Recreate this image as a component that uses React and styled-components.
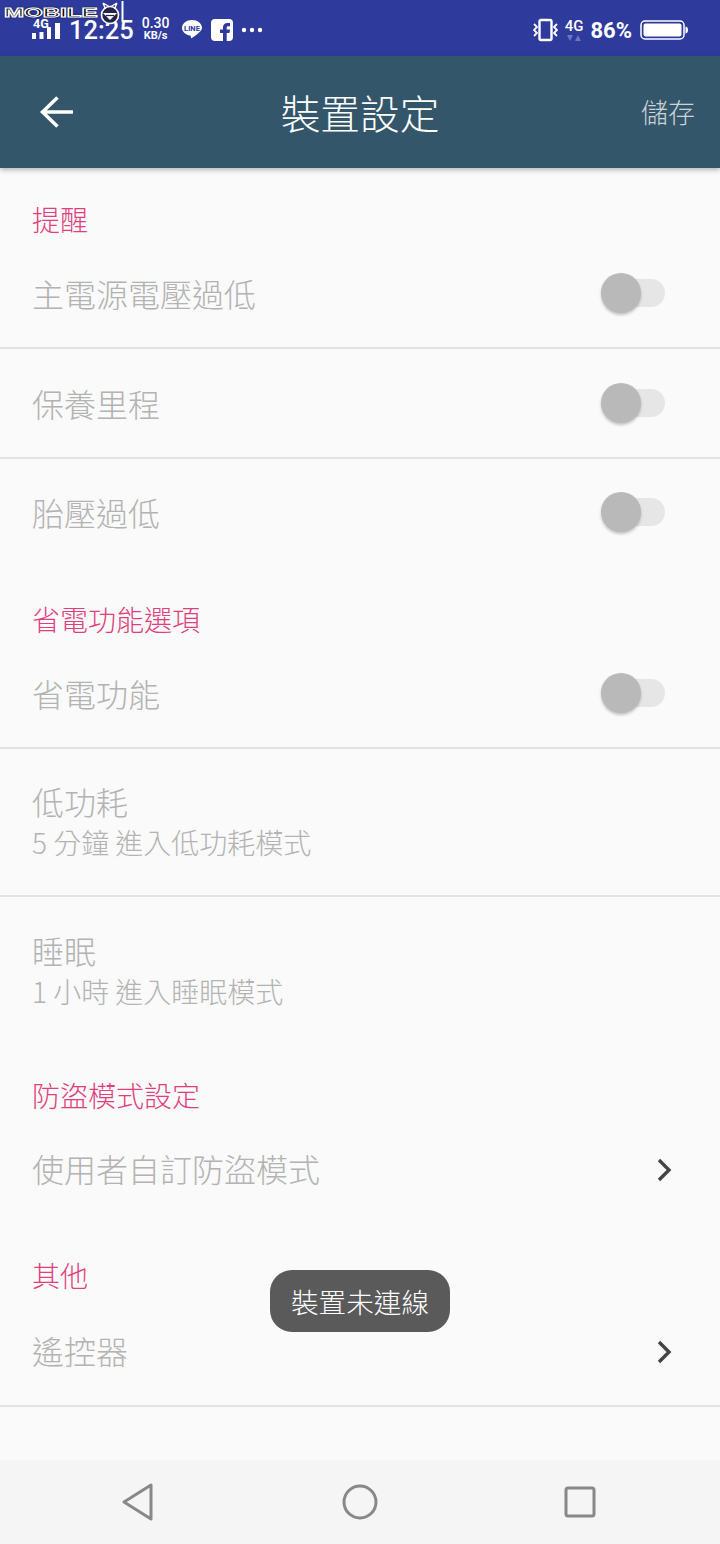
import React from "react";
import styled, { createGlobalStyle } from "styled-components";

const cjk = `"Noto Sans CJK TC", "Noto Sans", sans-serif`;

const GlobalStyle = createGlobalStyle`
  html, body {
    margin: 0;
    padding: 0;
    background: #fafafa;
  }
  * {
    box-sizing: border-box;
  }
`;

const Page = styled.div`
  width: 720px;
  height: 1544px;
  position: relative;
  display: flex;
  flex-flow: column;
  overflow: hidden;
  background: #fafafa;
  font-family: ${cjk};
  font-weight: 300;
`;

const StatusBar = styled.div`
  height: 56px;
  flex: none;
  background: #2e3b9c;
  color: #fff;
  display: flex;
  align-items: center;
  justify-content: space-between;
  padding: 4px 32px 0 32px;
  font-family: Roboto, sans-serif;
`;

const StatusGroup = styled.div`
  display: flex;
  align-items: center;
  gap: ${({ $gap }) => $gap || 8}px;
`;

const SignalBox = styled.div`
  position: relative;
  width: 29px;
  height: 38px;
`;

const SignalLabel = styled.span`
  position: absolute;
  left: 1px;
  top: 8px;
  font-size: 12.5px;
  font-weight: 700;
  line-height: 10px;
`;

const Clock = styled.span`
  font-size: 25.5px;
  font-weight: 500;
`;

const Speed = styled.div`
  display: flex;
  flex-flow: column;
  align-items: center;
  font-size: 14px;
  font-weight: 500;
  line-height: 14px;
  margin-top: -3px;
  small {
    font-size: 11px;
    font-weight: 700;
    line-height: 12px;
  }
`;

const Net = styled.div`
  display: flex;
  flex-flow: column;
  align-items: center;
  font-size: 15px;
  font-weight: 500;
  line-height: 14px;
`;

const Battery = styled.span`
  font-size: 22px;
  font-weight: 700;
`;

const Watermark = styled.div`
  position: absolute;
  left: 4px;
  top: 8px;
  display: flex;
  align-items: flex-start;
`;

const WatermarkText = styled.span`
  font-family: "Liberation Sans", sans-serif;
  font-weight: 700;
  font-size: 13px;
  line-height: 10px;
  width: 94px;
  white-space: nowrap;
  color: #000;
  -webkit-text-stroke: 0.9px #fff;
  text-shadow: 0 0 2px #000;
  transform: scaleX(1.85);
  transform-origin: left center;
`;

const WatermarkLogo = styled.svg`
  margin-top: -7px;
`;

const Toolbar = styled.div`
  height: 112px;
  flex: none;
  background: #34566b;
  display: flex;
  align-items: center;
  justify-content: space-between;
  padding: 0 25px 0 40px;
  position: relative;
  box-shadow: 0 2px 5px rgba(0, 0, 0, 0.28);
  z-index: 2;
`;

const ToolbarTitle = styled.div`
  position: absolute;
  left: 0;
  right: 0;
  text-align: center;
  color: #fff;
  font-size: 39.7px;
  line-height: 56px;
`;

const SaveLabel = styled.span`
  color: #ccd3d8;
  font-size: 27px;
  line-height: 40px;
`;

const Content = styled.div`
  flex: 1;
  display: flex;
  flex-flow: column;
`;

const SectionHeading = styled.div`
  height: 71px;
  padding: 34px 0 0 32px;
  color: #df3f7d;
  font-size: 28px;
  line-height: 34px;
`;

const Row = styled.div`
  height: ${({ $height }) => $height}px;
  flex: none;
  display: flex;
  align-items: center;
  justify-content: space-between;
  padding: 0 48px ${({ $trim }) => $trim || 0}px 32px;
  border-bottom: ${({ $divider }) => ($divider ? "2px solid #e3e3e3" : "none")};
`;

const RowText = styled.div`
  display: flex;
  flex-flow: column;
`;

const RowTitle = styled.div`
  color: #b3b3b3;
  font-size: 32px;
  line-height: 41px;
`;

const RowSub = styled.div`
  color: #b3b3b3;
  font-size: 28px;
  line-height: 41px;
`;

const ToggleTrack = styled.div`
  position: relative;
  width: 58px;
  height: 28px;
  margin-right: 7px;
  border-radius: 14px;
  background: #e6e6e6;
`;

const ToggleThumb = styled.div`
  position: absolute;
  left: -6px;
  top: -6px;
  width: 40px;
  height: 40px;
  border-radius: 50%;
  background: #b9b9b9;
  box-shadow: 0 2px 3px rgba(0, 0, 0, 0.22);
`;

const Chevron = styled.svg`
  margin-top: 3px;
`;

const Toast = styled.div`
  position: absolute;
  left: 270px;
  top: 1270px;
  width: 180px;
  height: 62px;
  border-radius: 22px;
  background: #5a5a5a;
  color: #fff;
  font-size: 27.6px;
  line-height: 62px;
  text-align: center;
`;

const NavBar = styled.div`
  height: 84px;
  flex: none;
  background: #f5f5f5;
  display: grid;
  grid-template-columns: 275px 170px 270px;
  align-items: center;
  justify-items: center;
`;

const SettingRow = ({ title, sub, divider, toggle, chevron, height, trim }) => (
  <Row $divider={divider} $height={height} $trim={trim}>
    <RowText>
      <RowTitle>{title}</RowTitle>
      {sub && <RowSub>{sub}</RowSub>}
    </RowText>
    {toggle && (
      <ToggleTrack>
        <ToggleThumb />
      </ToggleTrack>
    )}
    {chevron && (
      <Chevron width="16" height="24" viewBox="0 0 16 24" fill="none">
        <path d="M3 2l10 10L3 22" stroke="#444" strokeWidth="3.4" />
      </Chevron>
    )}
  </Row>
);

const App = () => (
  <Page>
    <GlobalStyle />
    <StatusBar>
      <StatusGroup $gap={8}>
        <SignalBox>
          <SignalLabel>4G</SignalLabel>
          <svg width="29" height="38" viewBox="0 0 29 38" fill="#fff">
            <rect x="0" y="22" width="4" height="6" />
            <rect x="7.500" y="21" width="4" height="7" />
            <rect x="15" y="16" width="4" height="12" />
            <rect x="23" y="12" width="5" height="16" />
          </svg>
        </SignalBox>
        <Clock>12:25</Clock>
        <Speed>
          0.30
          <small>KB/s</small>
        </Speed>
        <svg width="22" height="22" viewBox="0 0 22 22" style={{ marginLeft: 4 }}>
          <path d="M11 1C5.500 1 1 4.400 1 8.800c0 3.900 3.600 7.200 8.400 7.800.4.100.7 2.900.7 2.900s5.700-3.200 9-6.900c1.500-1.700 1.900-2.600 1.900-3.800C21 4.400 16.500 1 11 1z" fill="#fff" />
          <text x="11" y="11.500" fontSize="7.500" fontWeight="700" textAnchor="middle" fill="#2e3b9c" fontFamily="Roboto">LINE</text>
        </svg>
        <svg width="22" height="22" viewBox="0 0 22 22">
          <rect x="0" y="0" width="22" height="22" rx="4" fill="#fff" />
          <path d="M12 22v-8H9v-3.500h3V8.500C12 5.500 13.800 4 16.300 4H19v3.300h-1.800c-1.200 0-1.500.6-1.500 1.500v1.700H19l-.5 3.500h-2.800v8z" fill="#2e3b9c" />
        </svg>
        <svg width="22" height="6" viewBox="0 0 22 6" fill="#fff">
          <circle cx="3" cy="3" r="2.200" />
          <circle cx="11" cy="3" r="2.200" />
          <circle cx="19" cy="3" r="2.200" />
        </svg>
      </StatusGroup>
      <StatusGroup $gap={7}>
        <svg width="25" height="24" viewBox="0 0 25 24" fill="none" stroke="#fff" strokeWidth="2.400">
          <rect x="6.500" y="2" width="12" height="20" rx="1.500" />
          <path d="M1 6l3 3-3 3 3 3-3 3M24 6l-3 3 3 3-3 3 3 3" strokeWidth="1.800" />
        </svg>
        <Net>
          4G
          <svg width="16" height="9" viewBox="0 0 16 9" fill="#6b76bd">
            <path d="M1 2h6L4 8zM9 8h6l-3-6z" />
          </svg>
        </Net>
        <Battery>86%</Battery>
        <svg width="48" height="20" viewBox="0 0 48 20" fill="none" style={{ marginLeft: 1 }}>
          <rect x="1" y="1" width="43" height="18" rx="4" stroke="#fff" strokeWidth="1.500" />
          <rect x="3.500" y="3.500" width="38" height="13" rx="2" fill="#fff" />
          <path d="M45.500 6.500c1.500 0 2.500 1.500 2.500 3.500s-1 3.500-2.500 3.500z" fill="#fff" />
        </svg>
      </StatusGroup>
    </StatusBar>

    <Watermark>
      <WatermarkText>MOBILE</WatermarkText>
      <WatermarkLogo width="27" height="24" viewBox="0 0 27 24" fill="none">
        <circle cx="12" cy="14" r="8.500" fill="#23234a" stroke="#fff" strokeWidth="1.600" />
        <path d="M5 2l2.500 6M19 2l-2.500 6M5 2l6 3.500M19 2l-6 3.500" stroke="#fff" strokeWidth="1.400" />
        <path d="M5 12h14l-7 7z" fill="#fff" />
        <path d="M8 14.500h8" stroke="#23234a" strokeWidth="1.200" />
        <path d="M24.500 0v21" stroke="#fff" strokeWidth="2" />
      </WatermarkLogo>
    </Watermark>

    <Toolbar>
      <svg width="33" height="32" viewBox="0 0 33 32" fill="none" stroke="#fff" strokeWidth="3.500">
        <path d="M33 16H3M17.500 1.500L2.500 16l15 14.500" />
      </svg>
      <ToolbarTitle>裝置設定</ToolbarTitle>
      <SaveLabel>儲存</SaveLabel>
    </Toolbar>

    <Content>
      <SectionHeading>提醒</SectionHeading>
      <SettingRow title="主電源電壓過低" toggle divider height={110} />
      <SettingRow title="保養里程" toggle divider height={110} />
      <SettingRow title="胎壓過低" toggle height={109} trim={3} />
      <SectionHeading>省電功能選項</SectionHeading>
      <SettingRow title="省電功能" toggle divider height={110} />
      <SettingRow title="低功耗" sub="5 分鐘 進入低功耗模式" divider height={148} />
      <SettingRow title="睡眠" sub="1 小時 進入睡眠模式" height={147} />
      <SectionHeading>防盜模式設定</SectionHeading>
      <SettingRow title="使用者自訂防盜模式" chevron height={109} trim={3} />
      <SectionHeading>其他</SectionHeading>
      <SettingRow title="遙控器" chevron divider height={112} />
    </Content>

    <NavBar>
      <svg width="32" height="38" viewBox="0 0 32 38" fill="none" stroke="#888" strokeWidth="3" strokeLinejoin="round">
        <path d="M29 2v34L2 19z" />
      </svg>
      <svg width="36" height="36" viewBox="0 0 36 36" fill="none" stroke="#888" strokeWidth="3">
        <circle cx="18" cy="18" r="16" />
      </svg>
      <svg width="32" height="32" viewBox="0 0 32 32" fill="none" stroke="#888" strokeWidth="3">
        <rect x="2" y="2" width="28" height="28" rx="2" />
      </svg>
    </NavBar>

    <Toast>裝置未連線</Toast>
  </Page>
);

export default App;
